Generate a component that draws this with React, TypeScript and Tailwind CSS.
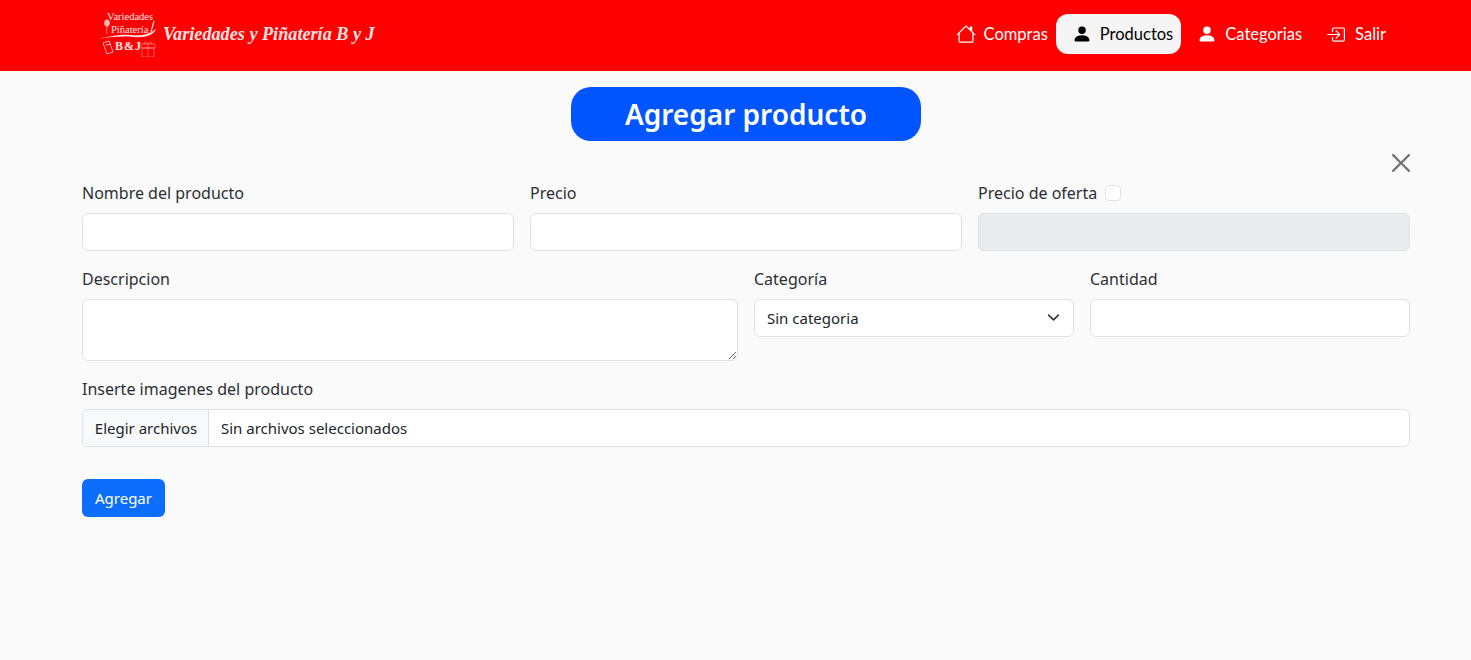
import { BsBoxArrowInRight, BsHouse, BsPersonFill } from 'react-icons/bs';

const inputClass =
  'block h-[38px] w-full rounded-[6px] border border-[#dee2e6] px-3 text-base text-[#212529]';
const labelClass = 'mb-2 block h-6 text-base leading-6 text-[#2b2f33]';

function Logo() {
  return (
    <div className="relative h-[46px] w-[60px] font-['Liberation_Serif',serif] text-[#ffe4e4]">
      <span className="absolute left-[9px] top-[0px] text-[10.5px] leading-[12px] whitespace-nowrap">Variedades</span>
      <span className="absolute left-[13px] top-[13px] text-[10.5px] leading-[12px] whitespace-nowrap">Piñatería</span>
      <span className="absolute left-[17px] top-[28px] text-[12px] font-bold leading-[14px] whitespace-nowrap [word-spacing:-2px]">B &amp; J</span>
      <svg viewBox="0 0 60 46" className="absolute inset-0 h-full w-full" fill="none" stroke="#ffdcdc">
        <ellipse cx="9" cy="12" rx="2.8" ry="3.4" fill="#ffb8b8" stroke="none" />
        <path d="M9 15c0 3-1 4 0 8" strokeWidth="0.6" />
        <path d="M1 27.500c12-2 20-4.500 32-3.500 9 1 18 0 25-6-2 6-11 9-22 8-12-1-22 0-35 1.500z" fill="#ffe4e4" stroke="none" />
        <path d="M56 10l-3 11" strokeWidth="1.2" />
        <path d="M5 32l6-2 4 11-6 2z M8 34l5-1" strokeWidth="0.8" />
        <path d="M44 37h12v9H44z M43 33h14v4H43z M50 33v13 M50 33c-3-4-5-1-3 0 M50 33c3-4 5-1 3 0" strokeWidth="0.6" opacity="0.7" />
      </svg>
    </div>
  );
}

function NavItem({
  icon,
  label,
  active,
  className,
}: {
  icon: React.ReactNode;
  label: string;
  active?: boolean;
  className: string;
}) {
  return (
    <a
      className={`flex h-10 items-center rounded-xl pr-2 ${className} ${active ? 'bg-[#f5f5f5] text-black' : 'text-white'}`}
    >
      {icon}
      <span>{label}</span>
    </a>
  );
}

export default function App() {
  return (
    <div className="min-h-[660px] bg-[#fafafa] font-['Noto_Sans',sans-serif]">
      <nav className="flex h-[71px] items-center justify-between bg-[#ff0000] pb-[3px] pl-[98px] pr-[77px]">
        <div className="flex items-center gap-[5px]">
          <Logo />
          <span className="pt-[2px] font-['Liberation_Serif',serif] text-[18.2px] font-bold italic text-[#ffe4e4]">
            Variedades y Piñatería B y J
          </span>
        </div>
        <div className="flex items-center font-['Lato',sans-serif] text-[16.5px]">
          <NavItem className="pl-2" icon={<BsHouse className="mr-2 text-[20px]" />} label="Compras" />
          <NavItem
            active
            className="pl-4"
            icon={<BsPersonFill className="mr-2 text-[20px]" />}
            label="Productos"
          />
          <NavItem className="pl-4" icon={<BsPersonFill className="mr-2 text-[20px]" />} label="Categorias" />
          <NavItem className="pl-4" icon={<BsBoxArrowInRight className="mr-[10px] text-[19px]" />} label="Salir" />
        </div>
      </nav>

      <main className="px-[82px] pt-4 pr-[61px]">
        <div className="flex justify-center">
          <h1 className="flex h-[54px] w-[350px] items-center justify-center rounded-[20px] bg-[#0055ff] text-[28px] font-semibold text-white">
            Agregar producto
          </h1>
        </div>

        <div className="mt-[13px] flex h-[27px] justify-end">
          <svg viewBox="0 0 16 16" className="h-[18px] w-[18px]" fill="#737373">
            <path d="M.293.293a1 1 0 0 1 1.414 0L8 6.586 14.293.293a1 1 0 1 1 1.414 1.414L9.414 8l6.293 6.293a1 1 0 0 1-1.414 1.414L8 9.414l-6.293 6.293a1 1 0 0 1-1.414-1.414L6.586 8 .293 1.707a1 1 0 0 1 0-1.414z" />
          </svg>
        </div>

        <form className="w-[1328px]">
          <div className="grid grid-cols-3 gap-4">
            <div>
              <label className={labelClass}>Nombre del producto</label>
              <input className={`${inputClass} bg-white`} />
            </div>
            <div>
              <label className={labelClass}>Precio</label>
              <input className={`${inputClass} bg-white`} />
            </div>
            <div>
              <label className={`${labelClass} flex items-center gap-2`}>
                Precio de oferta
                <span className="h-4 w-4 rounded-[4px] border border-[#dee2e6] bg-white" />
              </label>
              <input disabled className={`${inputClass} bg-[#e9ecef]`} />
            </div>
          </div>

          <div className="mt-4 grid grid-cols-[656px_320px_320px] gap-4">
            <div>
              <label className={labelClass}>Descripcion</label>
              <textarea className="block h-[62px] w-full rounded-[6px] border border-[#dee2e6] bg-white px-3 py-1.5 text-base" />
            </div>
            <div>
              <label className={labelClass}>Categoría</label>
              <div className="relative">
                <select className={`${inputClass} appearance-none bg-white text-[15px]`}>
                  <option>Sin categoria</option>
                </select>
                <svg
                  viewBox="0 0 16 16"
                  className="pointer-events-none absolute right-[14px] top-[12px] h-[13px] w-[13px]"
                  fill="none"
                  stroke="#343a40"
                  strokeWidth="2"
                  strokeLinecap="round"
                  strokeLinejoin="round"
                >
                  <path d="m2 5 6 6 6-6" />
                </svg>
              </div>
            </div>
            <div>
              <label className={labelClass}>Cantidad</label>
              <input className={`${inputClass} bg-white`} />
            </div>
          </div>

          <div className="mt-4">
            <label className={labelClass}>Inserte imagenes del producto</label>
            <div className="flex h-[38px] items-center overflow-hidden rounded-[6px] border border-[#dee2e6] bg-white text-[15px] text-[#212529]">
              <span className="flex h-full w-[126px] items-center justify-center border-r border-[#dee2e6] bg-[#f8f9fa] pl-px">
                Elegir archivos
              </span>
              <span className="pl-3">Sin archivos seleccionados</span>
            </div>
          </div>

          <button
            type="button"
            className="mt-8 flex h-[38px] w-[83px] items-center justify-center rounded-[6px] bg-[#0d6efd] text-[15px] text-white"
          >
            Agregar
          </button>
        </form>
      </main>
    </div>
  );
}
